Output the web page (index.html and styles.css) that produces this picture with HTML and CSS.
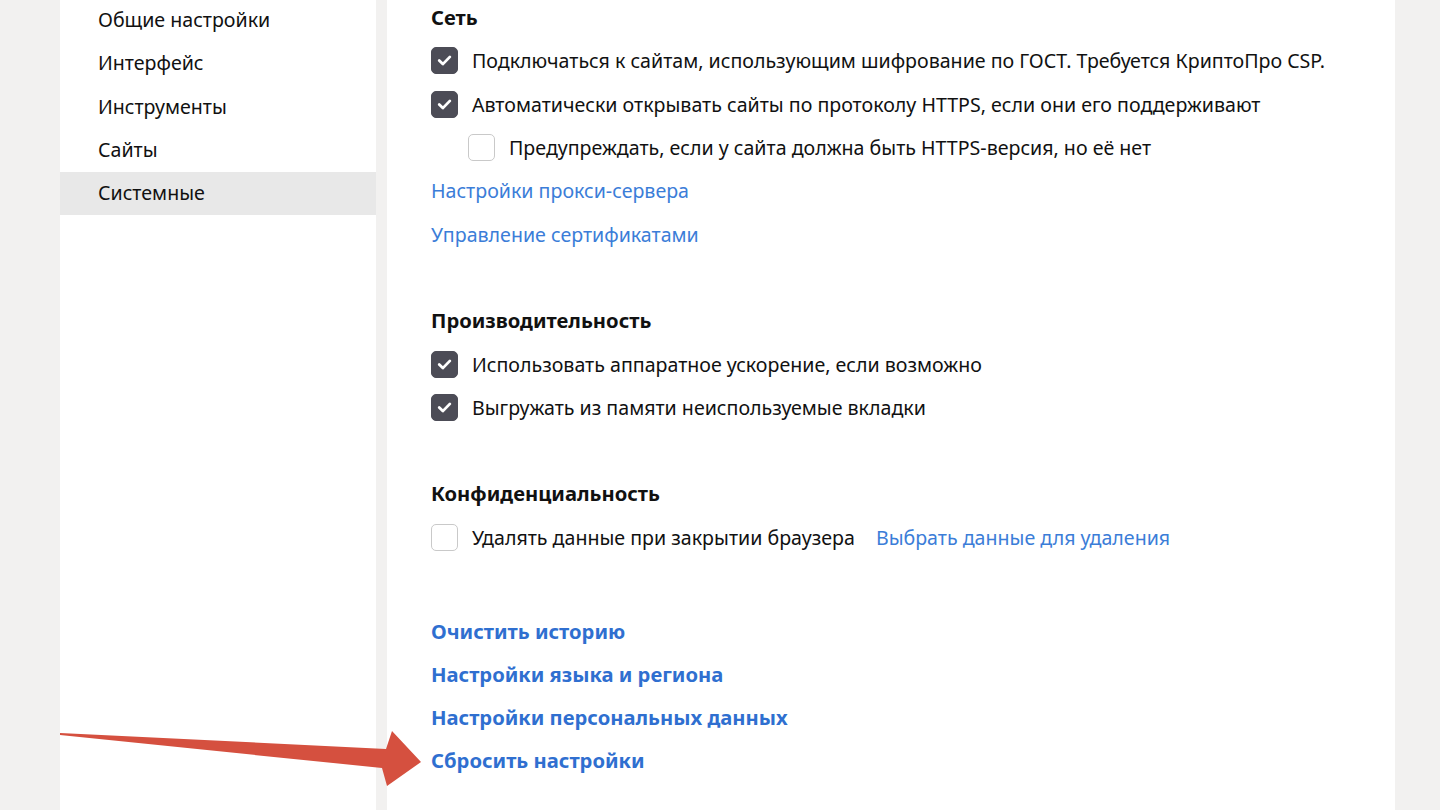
FILE: index.html
```html
<!DOCTYPE html>
<html lang="ru">
<head>
  <meta charset="UTF-8">
  <meta name="viewport" content="width=device-width, initial-scale=1.0">
  <title>Настройки — Системные</title>
  <link rel="stylesheet" href="styles.css">
</head>
<body>
  <div class="layout">
    <nav class="sidebar">
      <a class="nav-item">Общие настройки</a>
      <a class="nav-item">Интерфейс</a>
      <a class="nav-item">Инструменты</a>
      <a class="nav-item">Сайты</a>
      <a class="nav-item active">Системные</a>
    </nav>

    <main class="content">
      <section class="section">
        <h2>Сеть</h2>
        <label class="row">
          <span class="check checked"><svg viewBox="0 0 27 27"><path d="M7.8 13.6l3.9 3.8 7.6-7.8"/></svg></span>
          Подключаться к сайтам, использующим шифрование по ГОСТ. Требуется КриптоПро CSP.
        </label>
        <label class="row">
          <span class="check checked"><svg viewBox="0 0 27 27"><path d="M7.8 13.6l3.9 3.8 7.6-7.8"/></svg></span>
          Автоматически открывать сайты по протоколу HTTPS, если они его поддерживают
        </label>
        <label class="row sub">
          <span class="check"></span>
          Предупреждать, если у сайта должна быть HTTPS-версия, но её нет
        </label>
        <div class="row"><a class="link">Настройки прокси-сервера</a></div>
        <div class="row"><a class="link">Управление сертификатами</a></div>
      </section>

      <section class="section">
        <h2>Производительность</h2>
        <label class="row">
          <span class="check checked"><svg viewBox="0 0 27 27"><path d="M7.8 13.6l3.9 3.8 7.6-7.8"/></svg></span>
          Использовать аппаратное ускорение, если возможно
        </label>
        <label class="row">
          <span class="check checked"><svg viewBox="0 0 27 27"><path d="M7.8 13.6l3.9 3.8 7.6-7.8"/></svg></span>
          Выгружать из памяти неиспользуемые вкладки
        </label>
      </section>

      <section class="section">
        <h2>Конфиденциальность</h2>
        <div class="row">
          <span class="check"></span>
          <span>Удалять данные при закрытии браузера</span>
          <a class="link extra">Выбрать данные для удаления</a>
        </div>
      </section>

      <section class="section actions">
        <div class="row"><a class="link strong">Очистить историю</a></div>
        <div class="row"><a class="link strong">Настройки языка и региона</a></div>
        <div class="row"><a class="link strong">Настройки персональных данных</a></div>
        <div class="row"><a class="link strong">Сбросить настройки</a></div>
      </section>
    </main>
  </div>

  <!-- стрелка-указатель поверх скриншота -->
  <svg class="arrow" viewBox="0 0 1440 810">
    <polygon points="60,733 386,749 392,731 421,762 387,786 382,768 60,735"/>
  </svg>
</body>
</html>
```

FILE: styles.css
```css
body {
  margin: 0;
  background-color: #f2f1f0;
  font-family: 'Noto Sans', 'Open Sans', sans-serif;
  font-size: 19.6px;
  color: #111;
  overflow: hidden;
}
.layout {
  display: flex;
  gap: 11px;
  padding-left: 60px;
  height: 810px;
}
.sidebar {
  width: 316px;
  background-color: #fff;
  display: flex;
  flex-direction: column;
  margin-top: -1px;
}
.nav-item {
  display: block;
  height: 43.3px;
  line-height: 41px;
  padding-left: 38px;
  color: #111;
}
.nav-item.active {
  background-color: #e8e8e8;
}
.content {
  width: 964px;
  background-color: #fff;
  padding-left: 44px;
  margin-top: -4px;
}
.section {
  margin-bottom: 43.3px;
}
.section h2 {
  margin: 0;
  height: 43.3px;
  line-height: 42px;
  font-size: 20.2px;
  font-weight: 700;
}
.row {
  display: flex;
  align-items: center;
  gap: 14px;
  height: 43.3px;
  white-space: nowrap;
}
.row.sub {
  padding-left: 37px;
}
.check {
  flex: none;
  width: 25px;
  height: 25px;
  border: 1px solid #c9c9c9;
  border-radius: 5px;
  background-color: #fff;
}
.check.checked {
  background-color: #4c4c56;
  border-color: #4c4c56;
}
.check svg {
  display: block;
  width: 25px;
  height: 25px;
  fill: none;
  stroke: #fff;
  stroke-width: 3;
  stroke-linecap: round;
  stroke-linejoin: round;
}
.link {
  color: #3b7dd8;
  cursor: pointer;
}
.link.extra {
  margin-left: 7px;
}
.link.strong {
  color: #2f6fd0;
  font-size: 20.2px;
  font-weight: 700;
}
.actions {
  margin-top: 50px;
}
.arrow {
  position: absolute;
  left: 0;
  top: 0;
  width: 1440px;
  height: 810px;
  pointer-events: none;
}
.arrow polygon {
  fill: #d5503f;
}
```
